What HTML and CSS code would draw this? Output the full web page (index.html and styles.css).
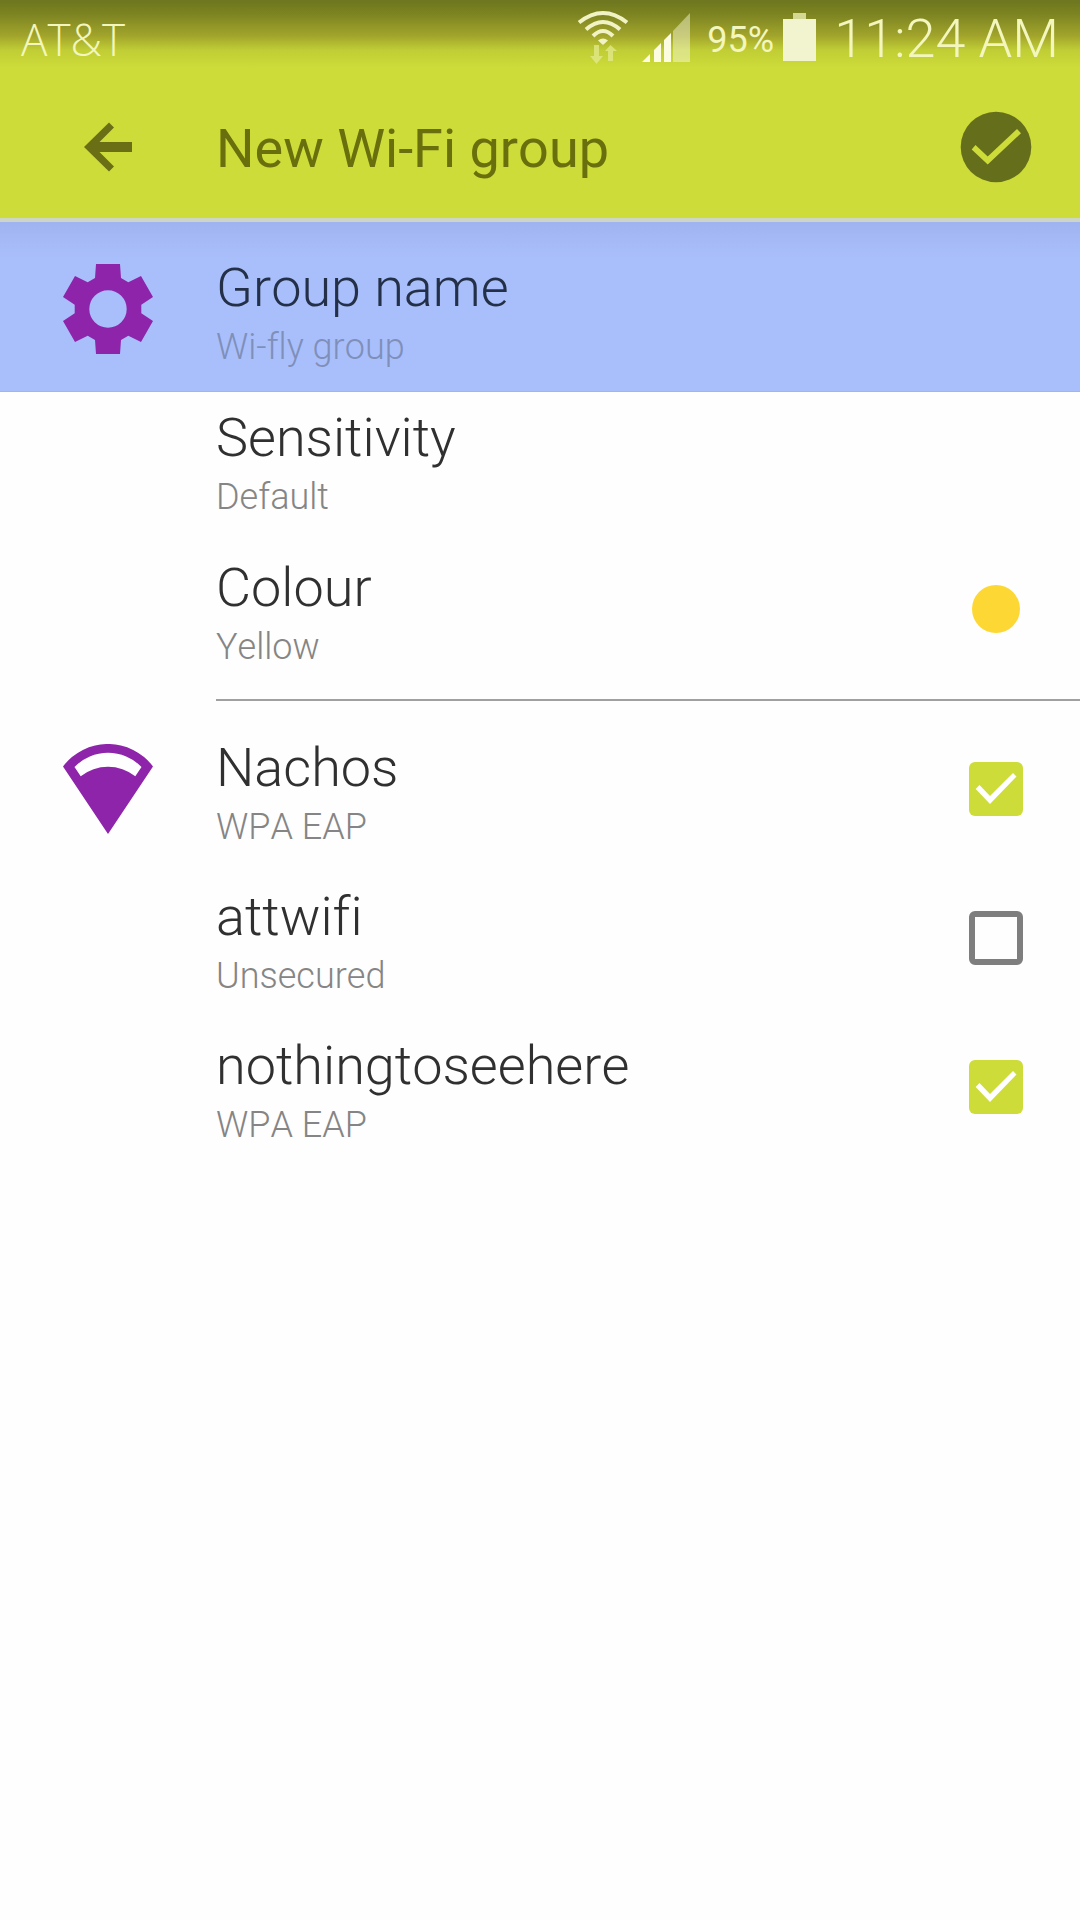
FILE: index.html
```
<!DOCTYPE html>
<html lang="en">
<head>
    <meta charset="UTF-8">
    <meta name="viewport" content="width=device-width, initial-scale=1.0">
    <title>New Wi-Fi group</title>
    <link rel="stylesheet" href="styles.css">
</head>
<body>
    <div class="header">
        <!-- Status bar -->
        <div class="status-bar">
            <span class="carrier">AT&amp;T</span>
            <svg class="wifi-signal" width="52" height="76" viewBox="0 0 52 76">
                <g fill="none" stroke="#f1f3c4" stroke-width="4">
                    <path d="M2 22.5Q26 3.5 50 22.5"/>
                    <path d="M9 29.5Q26 14.5 43 29.5"/>
                    <path d="M16 36Q26 26 36 36"/>
                </g>
                <path d="M21 40.5Q26 36.5 31 40.5L26 45z" fill="#f1f3c4"/>
                <path d="M17 45h5v11h4l-6.500 8-6.500-8h4zM31 61h5V51h4l-6.500-6-5.500 6h3z" fill="#e3ea8e" opacity=".75"/>
            </svg>
            <svg class="cell-signal" width="48" height="76" viewBox="0 0 48 76">
                <path d="M0 62L8 54v8zM12 62V50l7-7v19zM22 62V40l7-7v29z" fill="#fbfce0"/>
                <path d="M31 62V31L48 13v49z" fill="#fbfce0" opacity=".45"/>
            </svg>
            <span class="battery-text">95%</span>
            <svg class="battery" width="34" height="76" viewBox="0 0 34 76">
                <path d="M11 13h13v6H11z" fill="#d3d892"/>
                <path d="M1 19h33v42H1z" fill="#f1f4ce"/>
            </svg>
            <span class="clock">11:24 AM</span>
        </div>

        <!-- Toolbar -->
        <div class="toolbar">
            <svg class="back-icon" width="48" height="50" viewBox="0 0 48 50">
                <path d="M0 25L25 0.500l5 5L15.500 20H48v10H15.500L30 44.500l-5 5z"/>
            </svg>
            <h1>New Wi-Fi group</h1>
            <svg class="done-icon" width="72" height="72" viewBox="0 0 72 72">
                <circle cx="36" cy="36" r="35.300" fill="#656e1a"/>
                <path d="M11.700 38.500L15.500 34l12.200 11.500L57 18l4 4.300L27.700 53.500z" fill="#cddc39"/>
            </svg>
        </div>
    </div>

    <!-- Group settings -->
    <div class="row selected">
        <div class="row-icon">
            <svg width="90" height="90" viewBox="-45 -45 90 90">
                <path fill="#8e24aa" fill-rule="evenodd" d="M-12-45H12L13-31 20.300-26.800 33-32.900 45-12.100 33.300-4.200V4.200L45 12.100 33 32.900 20.300 26.800 13 31 12 45H-12L-13 31-20.300 26.800-33 32.900-45 12.100-33.300 4.200V-4.200L-45-12.100-33-32.900-20.300-26.800-13-31zM0-18.700A18.700 18.700 0 1 0 0 18.700 18.700 18.700 0 1 0 0-18.700z"/>
            </svg>
        </div>
        <div class="row-text">
            <h2>Group name</h2>
            <p>Wi-fly group</p>
        </div>
    </div>
    <div class="row">
        <div class="row-icon"></div>
        <div class="row-text">
            <h2>Sensitivity</h2>
            <p>Default</p>
        </div>
    </div>
    <div class="row">
        <div class="row-icon"></div>
        <div class="row-text">
            <h2>Colour</h2>
            <p>Yellow</p>
        </div>
        <div class="row-action"><span class="colour-dot"></span></div>
    </div>

    <hr class="divider">

    <!-- Networks -->
    <div class="row network">
        <div class="row-icon">
            <svg width="90" height="90" viewBox="0 0 90 90">
                <path fill="#8e24aa" fill-rule="evenodd" d="M0 22.500A56.200 56.200 0 0 1 90 22.500L45 90zM11.500 23L17.700 32.300A44 44 0 0 1 72.300 32.300L78.500 23A46.700 46.700 0 0 0 11.500 23z"/>
            </svg>
        </div>
        <div class="row-text">
            <h2>Nachos</h2>
            <p>WPA EAP</p>
        </div>
        <div class="row-action">
            <span class="checkbox checked">
                <svg width="54" height="54" viewBox="0 0 54 54"><path d="M6.700 27L10.500 23 21 34 44 11l3.500 3.500L21 42z"/></svg>
            </span>
        </div>
    </div>
    <div class="row network">
        <div class="row-icon"></div>
        <div class="row-text">
            <h2>attwifi</h2>
            <p>Unsecured</p>
        </div>
        <div class="row-action"><span class="checkbox"></span></div>
    </div>
    <div class="row network">
        <div class="row-icon"></div>
        <div class="row-text">
            <h2>nothingtoseehere</h2>
            <p>WPA EAP</p>
        </div>
        <div class="row-action">
            <span class="checkbox checked">
                <svg width="54" height="54" viewBox="0 0 54 54"><path d="M6.700 27L10.500 23 21 34 44 11l3.500 3.500L21 42z"/></svg>
            </span>
        </div>
    </div>
</body>
</html>
```
FILE: styles.css
```
* {
    box-sizing: border-box;
}
body {
    font-family: Roboto, sans-serif;
    font-kerning: none;
    font-variant-ligatures: none;
    background-color: #fefefe;
    margin: 0;
    color: #303030;
}
h1, h2, p {
    margin: 0;
}
svg {
    display: block;
    flex: none;
}
.header {
    height: 222px;
    background: linear-gradient(#6e761f 0, #7c8421 14px, #a2a52b 36px, #c0cd35 50px, #cddc39 68px);
    border-bottom: 4px solid #cdd6c5;
}
.status-bar {
    display: flex;
    height: 76px;
    padding: 0 21px;
    color: #f3f6bd;
    white-space: nowrap;
}
.carrier {
    font-family: "Open Sans", sans-serif;
    font-weight: 300;
    font-size: 44px;
    line-height: 78px;
    margin-right: auto;
}
.cell-signal {
    margin-left: 13px;
}
.battery-text {
    font-size: 36px;
    line-height: 80px;
    width: 66px;
    margin-left: 17px;
}
.battery {
    margin-left: 9px;
}
.clock {
    font-weight: 300;
    font-size: 54px;
    line-height: 77px;
    margin-left: 18px;
}
.toolbar {
    display: flex;
    align-items: center;
    height: 142px;
    padding: 0 48px 0 84px;
}
.back-icon {
    fill: #6a6f15;
}
.toolbar h1 {
    flex: 1;
    margin-left: 84px;
    font-weight: 400;
    font-size: 54px;
    line-height: 64px;
    margin-top: 4px;
    color: #6a6f0d;
}
.row {
    display: flex;
    height: 150px;
    padding-top: 14px;
}
.row.network {
    height: 149px;
}
.row.selected {
    height: 170px;
    padding-top: 34px;
    background: linear-gradient(#9fb3f0, #a9bffb 36px);
    border-bottom: 1px solid #a5b4e4;
}
.row-icon {
    width: 216px;
    padding: 8px 0 0 63px;
}
.row-text {
    flex: 1;
}
.row-text h2 {
    font-weight: 300;
    font-size: 54px;
    line-height: 63px;
}
.row-text p {
    margin-top: 7px;
    font-weight: 300;
    font-size: 36px;
    line-height: 43px;
    color: #858585;
}
.selected h2 {
    color: #233048;
}
.row.selected p {
    color: #7f8fba;
}
.row-action {
    display: flex;
    align-items: center;
    justify-content: center;
    width: 168px;
    height: 106px;
}
.colour-dot {
    width: 48px;
    height: 48px;
    border-radius: 50%;
    background-color: #fdd835;
}
.checkbox {
    width: 54px;
    height: 54px;
    border: 6px solid #7e7e7e;
    border-radius: 6px;
}
.checkbox.checked {
    border: none;
    background-color: #cddc39;
}
.checkbox path {
    fill: #fff;
}
.divider {
    height: 2px;
    margin: 7px 0 21px 216px;
    border: none;
    background-color: #a0a0a0;
}
```
